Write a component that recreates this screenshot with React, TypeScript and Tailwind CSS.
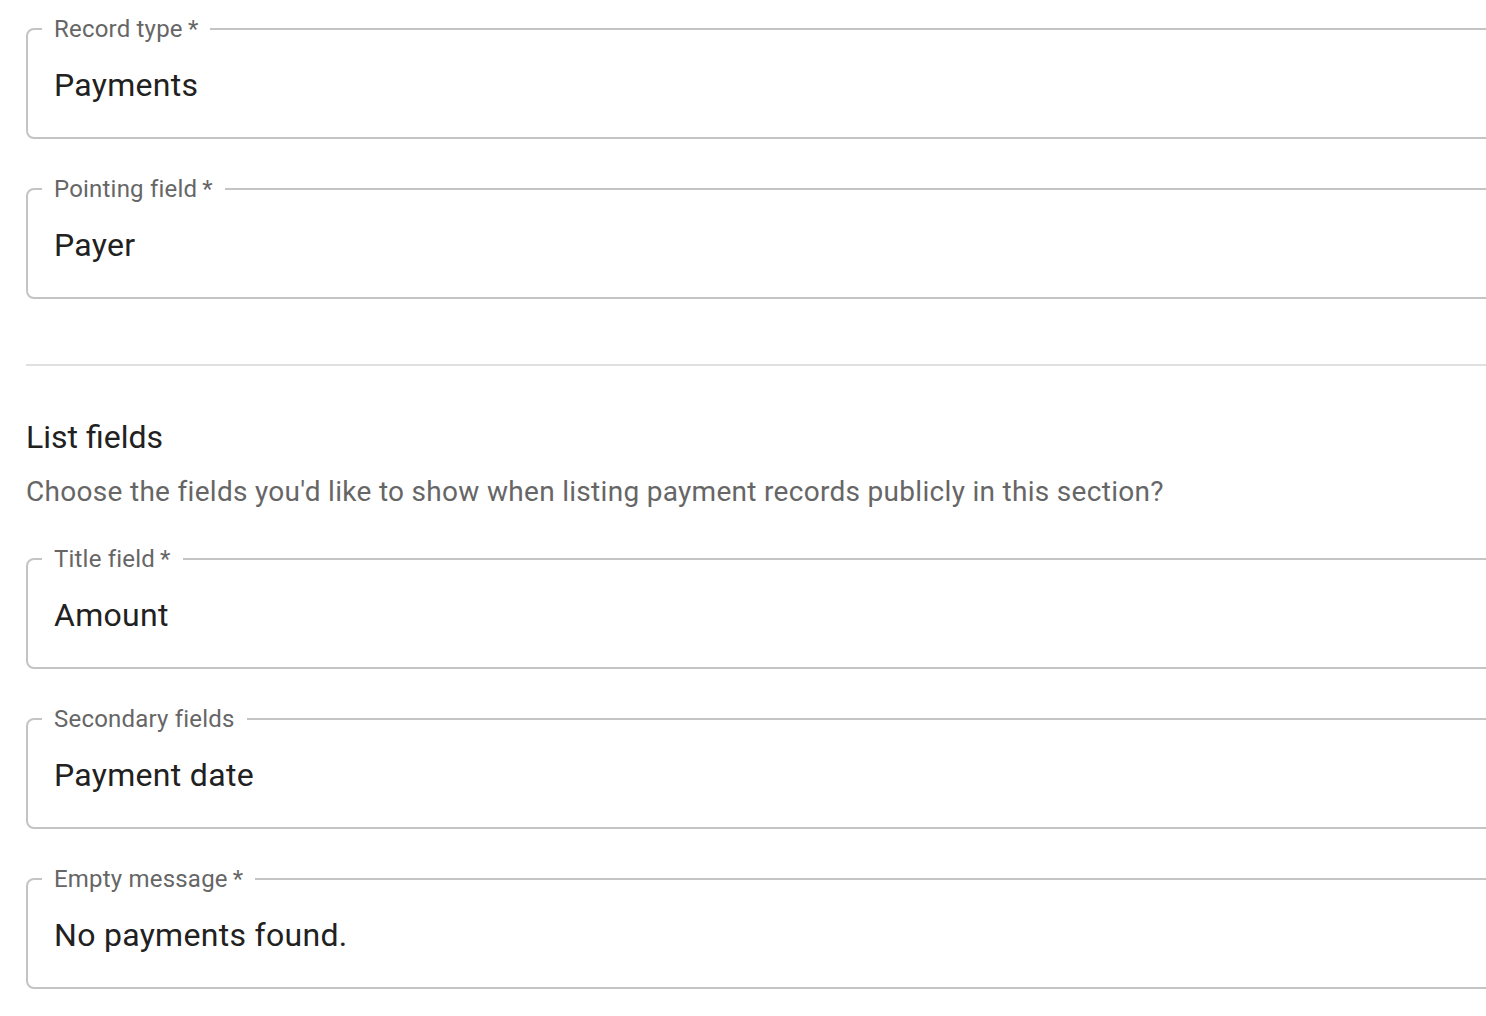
const fields = {
  record: [
    { label: "Record type", required: true, value: "Payments" },
    { label: "Pointing field", required: true, value: "Payer" },
  ],
  list: [
    { label: "Title field", required: true, value: "Amount" },
    { label: "Secondary fields", required: false, value: "Payment date" },
    { label: "Empty message", required: true, value: "No payments found." },
  ],
};

type FieldProps = { label: string; required: boolean; value: string };

const OutlinedField = ({ label, required, value }: FieldProps) => (
  <fieldset className="w-[1500px] rounded-lg border-2 border-[#c4c4c4] pl-[26px] pt-[21px] pb-[29px] mb-[38px] last:mb-0">
    <legend className="ml-[-12px] px-[12px] text-[24px] leading-[24px] tracking-[0.2px] text-[#666666]">
      {label}
      {required && "\u2009*"}
    </legend>
    <div className="text-[32px] leading-[46px] tracking-[0.3px] text-[#212121]">
      {value}
    </div>
  </fieldset>
);

const App = () => {
  return (
    <div
      className="w-full min-h-screen overflow-hidden bg-white pl-[26px] pt-[17px]"
      style={{ fontFamily: "Roboto, 'Liberation Sans', sans-serif" }}
    >
      <div className="flex flex-col">
        {fields.record.map((f) => (
          <OutlinedField key={f.label} {...f} />
        ))}
      </div>

      <hr className="w-[1500px] mt-[65px] border-0 border-t-2 border-[#e0e0e0]" />

      <h2 className="mt-[47px] text-[32px] leading-[48px] text-[#212121]">
        List fields
      </h2>
      <p className="mt-[11px] text-[28px] leading-[40px] tracking-[0.3px] text-[#666666]">
        Choose the fields you'd like to show when listing payment records
        publicly in this section?
      </p>

      <div className="mt-[35px] flex flex-col">
        {fields.list.map((f) => (
          <OutlinedField key={f.label} {...f} />
        ))}
      </div>
    </div>
  );
};

export default App;
